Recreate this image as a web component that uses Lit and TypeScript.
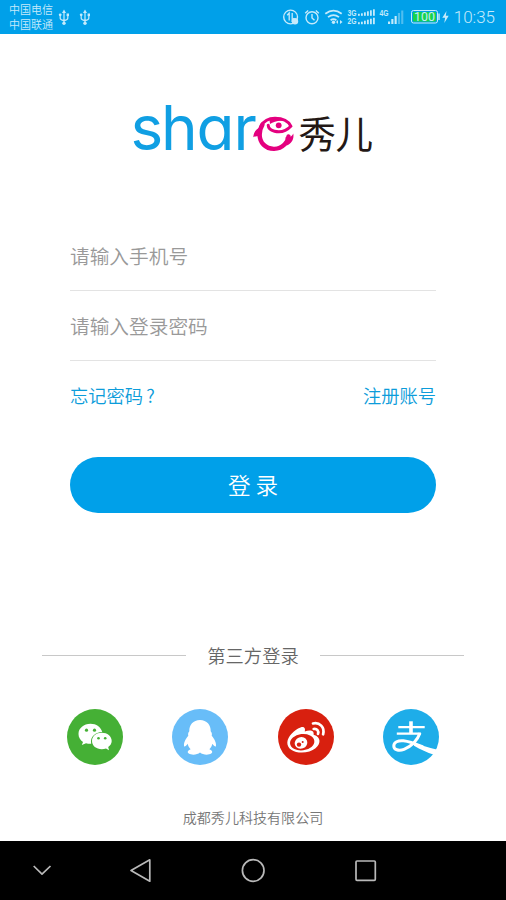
import { LitElement, html, css, svg } from "lit";
import { customElement } from "lit/decorators.js";

const usb = svg`<g fill="none" stroke="currentColor" stroke-width="1.2"><path d="M6 2.5V14M2.2 6V9.2Q2.2 10.6 6 11.6M9.8 6V9.2Q9.8 10.6 6 11.6"/></g><g fill="currentColor"><path d="M6 .5 8 4H4z"/><circle cx="6" cy="14.3" r="1.7"/><circle cx="2.2" cy="5.8" r="1.4"/><rect x="8.6" y="4.5" width="2.4" height="2.6"/></g>`;

@customElement("status-bar")
class StatusBar extends LitElement {
  static styles = css`
    :host { display: flex; height: 34px; background: #00a0e9; color: #c5eafb; font-family: Roboto, "Noto Sans CJK SC", sans-serif; box-sizing: border-box; padding: 0 11px 0 9px; }
    .carriers { font-size: 11px; line-height: 15.5px; padding-top: 2.5px; width: 49px; white-space: nowrap; }
    .usb { width: 12px; height: 17px; margin: 9px 9px 0 0; }
    .right { margin-left: auto; display: flex; }
    .icons { width: 168px; height: 34px; display: block; }
    .time { font-size: 17px; line-height: 35px; width: 44px; margin-left: 2px; white-space: nowrap; text-align: right; }
    .net { font: bold 9.5px "Liberation Sans", sans-serif; }
    .bat { font: 13px Roboto, sans-serif; }
  `;
  bars(x: number, y: number, heights: number[], step: number, dim = 9) {
    return heights.map((h, i) => svg`<rect x=${x + i * step} y=${y - h} width=${step - 1.2} height=${h} opacity=${i >= dim ? 0.4 : 1}/>`);
  }
  render() {
    return html`
      <div class="carriers"><div>中国电信</div><div>中国联通</div></div>
      <svg class="usb" viewBox="0 0 12 17">${usb}</svg>
      <svg class="usb" viewBox="0 0 12 17">${usb}</svg>
      <div class="right">
        <svg class="icons" viewBox="281 0 168 34" fill="currentColor">
          <g fill="none" stroke="currentColor" stroke-width="1.4">
            <circle cx="290.6" cy="17" r="6.9"/>
            <path d="M287.2 15.3 289.2 13V20.5M292.2 13V20.5L294.2 18.2" stroke-width="1.3"/>
            <circle cx="312" cy="17.8" r="6"/>
            <path d="M312 14V18L314.5 20.3M305.2 13.2 308.2 10.5M315.8 10.5 318.8 13.2"/>
            <path d="M325.3 13.7Q333.5 7.5 341.7 13.7M328 17.1Q333.5 13 339 17.1M330.6 20.2Q333.5 18.2 336.4 20.2" stroke-width="1.8"/>
          </g>
          <circle cx="295" cy="21.3" r="3.2"/>
          <circle cx="333.5" cy="22.3" r="1.7"/>
          <path d="M336 22 338 20V24zM342.5 22 340 20V24z"/>
          <text class="net" x="347.5" y="16" textLength="9" lengthAdjust="spacingAndGlyphs">3G</text>
          <text class="net" x="347.5" y="24.4" textLength="9" lengthAdjust="spacingAndGlyphs">2G</text>
          ${this.bars(358, 15.8, [2, 2.5, 3.5, 4.5, 5.5, 6.5], 3)}
          ${this.bars(358, 24.2, [2, 2.5, 3.5, 4.5, 5.5, 6.5], 3)}
          <text class="net" x="379.5" y="16" textLength="9" lengthAdjust="spacingAndGlyphs">4G</text>
          ${this.bars(388, 24, [2.5, 5, 8, 11, 13.5], 3.3, 3)}
          <rect x="411.5" y="10.5" width="26" height="12.5" rx="2" fill="none" stroke="currentColor"/>
          <rect x="413" y="12" width="23" height="9.5" rx="1" fill="#17d34a"/>
          <text class="bat" x="414" y="21.4" textLength="21" lengthAdjust="spacingAndGlyphs">100</text>
          <rect x="438.3" y="13.5" width="1.4" height="6.5"/>
          <path d="M446.5 11 442.3 17.8H445.1L444.3 23 448.7 15.8H445.8z"/>
        </svg>
        <div class="time">10:35</div>
      </div>`;
  }
}

@customElement("brand-logo")
class BrandLogo extends LitElement {
  static styles = css`
    :host { display: block; width: 250px; height: 90px; }
    svg { display: block; width: 250px; height: 90px; }
    .latin { font: 400 62px Inter, sans-serif; font-feature-settings: "cv11"; fill: #109fe3; }
    .han { font: 400 37.5px "Noto Sans CJK SC", sans-serif; fill: #231815; }
  `;
  render() {
    return html`<svg viewBox="128 84 250 90">
      <text class="latin" x="130.5 161 196.5 233.5" y="150.3">shar</text>
      <g fill="none" stroke="#e4007f" stroke-linecap="round">
        <path d="M261.2 126C264 120.5 269 118.3 275 118.3C283 118.3 288.5 121.5 290.8 126.2C286.5 130.8 280.5 132.6 274.5 131.2C270.5 130.2 268.3 128 268.2 125.2" stroke-width="3"/>
        <path d="M262.5 124.5C258.5 131 258.5 139.5 263.5 144.6C269.5 150.5 279 150 284.5 144.5C287 142 288.2 139.5 288.5 136.5" stroke-width="4.4"/>
      </g>
      <path fill="#e4007f" d="M261 127C256.5 128.6 253.5 132 253.3 137.3C256 135.6 258.8 136 261.5 138zM285.5 137.3C289.5 137.8 292 136.5 293.3 133.4C294.2 139.5 291.5 143.5 286.5 145.5zM269.5 120C273 117.3 282 117.5 287 121.3C280 119.8 274 121 270 124z"/>
      <circle cx="278.7" cy="125.3" r="2.9" fill="#e4007f"/>
      <text class="han" x="298.5 335.5" y="147.7">秀儿</text>
    </svg>`;
  }
}

const wechat = svg`<circle cx="28" cy="28" r="28" fill="#45b035"/>
  <path fill="#fff" d="M23.5 14.7C16.8 14.7 11.5 19 11.5 24.9C11.5 28.2 13.3 31 16 32.9L14.8 36.1 19 34.2C20.5 34.7 22.5 34.9 24.2 34.8C22.8 28.2 28.1 23.2 35.2 23.1C34 18 29.3 14.7 23.5 14.7z"/>
  <path fill="#fff" d="M34.8 23.8C29.3 23.8 25 27.3 25 32C25 36.8 29.3 40.2 34.8 40.2C36.3 40.2 37.7 39.9 39 39.4L42 41.2 41.2 38C43.3 36.5 44.7 34.5 44.7 32C44.7 27.3 40.3 23.8 34.8 23.8z"/>
  <g fill="#45b035"><circle cx="19.5" cy="21.2" r="1.6"/><circle cx="27.5" cy="21.2" r="1.6"/><circle cx="31.5" cy="29.2" r="1.3"/><circle cx="38.2" cy="29.2" r="1.3"/></g>`;

const qq = svg`<circle cx="28" cy="28" r="28" fill="#68bdf8"/>
  <path fill="#fff" d="M28 11C21.2 11 17 16 17.3 22.3C15.8 24 16 25.5 16.3 26.8C13.3 30.2 11.4 34.3 12.1 37.2C12.5 38.2 14 37.2 15.6 34.8C16.1 36.9 17.1 38.8 18.6 40.2C15.8 41.3 14.9 43.2 16.8 44.6C19.4 46.2 25.3 46 28 43.5C30.7 46 36.6 46.2 39.2 44.6C41.1 43.2 40.2 41.3 37.4 40.2C38.9 38.8 39.9 36.9 40.4 34.8C42 37.2 43.5 38.2 43.9 37.2C44.6 34.3 42.7 30.2 39.7 26.8C40 25.5 40.2 24 38.7 22.3C39 16 34.8 11 28 11z"/>`;

const weibo = svg`<circle cx="28" cy="28" r="28" fill="#d8200f"/>
  <path fill="#fff" d="M22.5 18.5C26 17.2 27.7 19 26.8 22.5C31.5 20.6 36.5 20.9 35.6 25.8C43.5 28.2 42.8 35 37.5 39.3C31.5 44.3 19.5 45 13.2 40.7C7.5 36.8 8.5 30 13.6 24.7C16.2 21.9 19.2 19.5 22.5 18.5z"/>
  <ellipse cx="24.2" cy="33.2" rx="12.2" ry="8.2" transform="rotate(-7 24.2 33.2)" fill="#d8200f"/>
  <ellipse cx="23" cy="33.9" rx="6.4" ry="5.7" transform="rotate(-20 23 33.9)" fill="#fff"/>
  <circle cx="21" cy="35.6" r="2.2" fill="#d8200f"/><circle cx="24.7" cy="33.1" r="1" fill="#d8200f"/>
  <path fill="none" stroke="#fff" stroke-width="2.7" stroke-linecap="round" d="M35 14.5C41.5 13 47 18.2 45.1 25.3M35.7 20C39 19.4 41 21.8 40 24.9"/>`;

const alipay = svg`<circle cx="28" cy="28" r="28" fill="#1eade9"/>
  <g fill="none" stroke="#fff"><path stroke-width="2.2" d="M15.3 18.2H41.7M13.8 24.7H38"/>
  <path stroke-width="3.6" d="M28 12.3V24.7"/>
  <path stroke-width="3" d="M37 24C34.5 31 28.5 37.2 21 40.3C15.5 42.5 10.8 40.5 10.8 36.9C10.8 33.2 15 31.2 20.5 31.8C27 32.5 34 35.5 40 38"/></g>
  <path fill="#fff" d="M31 33.5C37.5 36 45.5 38.8 53.6 40.6C53 42.5 52.2 44.2 51 45.8C44 43.6 37.5 40.5 31 36.8z"/>`;

@customElement("app-root")
class AppRoot extends LitElement {
  static styles = css`
    :host { display: flex; flex-direction: column; width: 506px; height: 900px; background: #fff; overflow: hidden; font-family: "Noto Sans CJK SC", sans-serif; font-weight: 350; }
    main { flex: 1; display: flex; flex-direction: column; }
    brand-logo { margin: 50px 0 0 128px; }
    .form { margin: 47px 70px 0; display: flex; flex-direction: column; }
    .field { height: 70px; box-sizing: border-box; border-bottom: 1px solid #e3e3e3; font-size: 19.7px; line-height: 70px; color: #999; }
    .links { display: flex; justify-content: space-between; font-size: 18.3px; line-height: 28px; margin-top: 20px; color: #0c9cda; }
    .mark { margin-left: 3px; }
    .login { margin-top: 48px; height: 56px; border: 0; border-radius: 28px; background: #00a0e9; color: #fff; font: inherit; font-size: 22.6px; line-height: 56px; padding: 0; }
    .third { display: flex; align-items: center; margin: 128px 42px 0; height: 28px; font-size: 18.3px; line-height: 28px; color: #666; gap: 21px; }
    .rule { flex: 1; height: 1px; background: #c8c8c8; }
    .social { display: flex; justify-content: space-between; margin: 40px 67px 0; }
    .social svg { width: 56px; height: 56px; display: block; }
    .company { text-align: center; font-size: 14.05px; line-height: 20px; margin-top: 42px; color: #777; }
    nav { height: 59px; background: #000; }
    nav svg { display: block; width: 506px; height: 59px; }
  `;
  render() {
    return html`
      <status-bar></status-bar>
      <main>
        <brand-logo></brand-logo>
        <div class="form">
          <div class="field">请输入手机号</div>
          <div class="field">请输入登录密码</div>
          <div class="links"><span>忘记密码<span class="mark">?</span></span><span>注册账号</span></div>
          <button class="login">登 录</button>
        </div>
        <div class="third"><span class="rule"></span><span>第三方登录</span><span class="rule"></span></div>
        <div class="social">${[wechat, qq, weibo, alipay].map((icon) => html`<svg viewBox="0 0 56 56">${icon}</svg>`)}</div>
        <div class="company">成都秀儿科技有限公司</div>
      </main>
      <nav>
        <svg viewBox="0 841 506 59" fill="none" stroke="#b9b9b9" stroke-width="1.7" stroke-linejoin="round">
          <path d="M33.7 866 42 874.2 50.5 866"/>
          <path d="M149.8 859.8V881.2L131 870.5z"/>
          <circle cx="253.2" cy="870.5" r="10.8"/>
          <rect x="356" y="861" width="19.3" height="19.3" rx="1"/>
        </svg>
      </nav>`;
  }
}
